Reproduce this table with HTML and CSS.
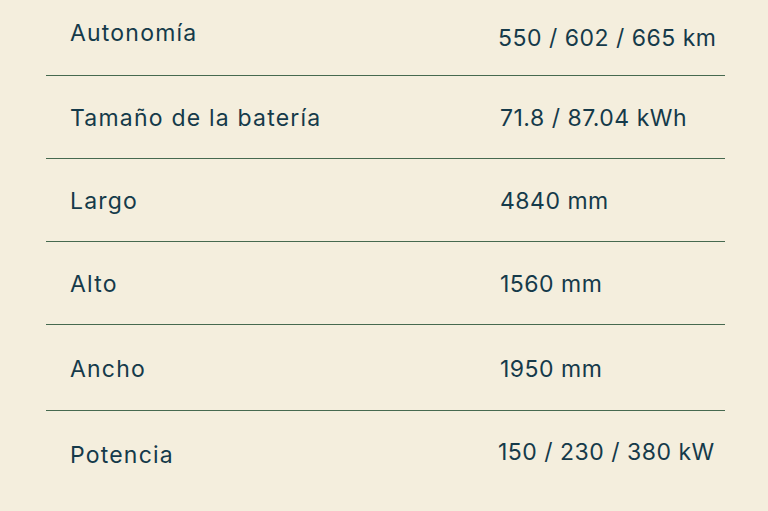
FILE: index.html
```html
<!DOCTYPE html>
<html lang="es">
<head>
<meta charset="utf-8">
<link rel="stylesheet" href="styles.css">
</head>
<body>
<div class="specs">
  <div class="row"><span class="label l-up">Autonomía</span><span class="value v-low">550 / 602 / 665 km</span></div>
  <div class="row"><span class="label">Tamaño de la batería</span><span class="value">71.8 / 87.04 kWh</span></div>
  <div class="row"><span class="label">Largo</span><span class="value">4840 mm</span></div>
  <div class="row"><span class="label">Alto</span><span class="value">1560 mm</span></div>
  <div class="row tall"><span class="label">Ancho</span><span class="value">1950 mm</span></div>
  <div class="row last"><span class="label l-down">Potencia</span><span class="value v-high">150 / 230 / 380 kW</span></div>
</div>
</body>
</html>
```
FILE: styles.css
```css
html, body {
  margin: 0;
  padding: 0;
  background: #f4eedd;
}
body {
  width: 768px;
  height: 511px;
  overflow: hidden;
  font-family: "Inter", "Open Sans", sans-serif;
  color: #153a4a;
}
.specs {
  margin: -7px 0 0 46px;
  width: 679px;
}
.row {
  box-sizing: border-box;
  height: 83px;
  display: grid;
  grid-template-columns: 428px 1fr;
  align-items: center;
  padding-left: 24px;
  border-bottom: 1px solid #46694f;
  font-size: 23px;
}
.row.tall { height: 86px; }
.row.last { border-bottom: none; }
.label { letter-spacing: 1.2px; position: relative; top: 1px; }
.value { letter-spacing: 0.5px; padding-left: 2px; position: relative; top: 1px; }
.l-up { top: -1px; }
.l-down { top: 2px; }
.v-low { top: 4px; left: -2px; }
.v-high { top: -1px; left: -2px; }
```
